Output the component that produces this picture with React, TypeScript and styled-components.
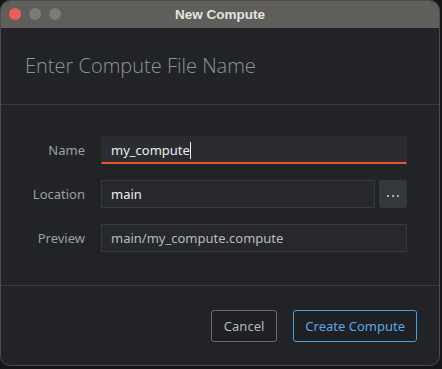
import styled, { createGlobalStyle } from "styled-components";

const GlobalStyle = createGlobalStyle`
    html, body {
        margin: 0;
        padding: 0;
        background: #141517;
        font-family: "Noto Sans", "Liberation Sans", sans-serif;
    }
`;

export default () => {
    return (
        <>
            <GlobalStyle />
            <Window>
                <TitleBar>
                    <Lights>
                        <Light color="#ec5f57" />
                        <Light color="#7b7a77" />
                        <Light color="#7b7a77" />
                    </Lights>
                    <Title>New Compute</Title>
                </TitleBar>
                <Header>
                    <Heading>Enter Compute File Name</Heading>
                </Header>
                <Form>
                    <Label>Name</Label>
                    <Field focused>
                        <Value>my_compute</Value>
                        <Caret />
                    </Field>
                    <Label>Location</Label>
                    <FieldRow>
                        <Field>
                            <Value>main</Value>
                        </Field>
                        <BrowseButton>
                            <Dot />
                            <Dot />
                            <Dot />
                        </BrowseButton>
                    </FieldRow>
                    <Label>Preview</Label>
                    <Field>
                        <Value muted>main/my_compute.compute</Value>
                    </Field>
                </Form>
                <Footer>
                    <Button>Cancel</Button>
                    <Button primary>Create Compute</Button>
                </Footer>
            </Window>
        </>
    );
};

const Window = styled.div`
    width: 440px;
    height: 366px;
    box-sizing: border-box;
    border: 1px solid #4a4b4d;
    border-radius: 10px;
    overflow: hidden;
    background: #212327;
    display: flex;
    flex-direction: column;
`;

const TitleBar = styled.div`
    height: 27px;
    flex: none;
    background: #5f5e5a;
    display: flex;
    align-items: center;
    justify-content: center;
    position: relative;
`;

const Lights = styled.div`
    position: absolute;
    left: 8px;
    top: 7px;
    display: flex;
    gap: 8px;
`;

const Light = styled.div.attrs({} as { color: string })`
    width: 12px;
    height: 12px;
    border-radius: 50%;
    background: ${(props) => props.color};
`;

const Title = styled.div`
    font-family: "Liberation Sans", "Noto Sans", sans-serif;
    font-weight: bold;
    font-size: 13.5px;
    color: #e4e3e0;
`;

const Header = styled.div`
    height: 77px;
    flex: none;
    box-sizing: border-box;
    padding-left: 24px;
    display: flex;
    align-items: center;
    border-bottom: 1px solid #393b3f;
`;

const Heading = styled.div`
    font-family: "Open Sans", "Noto Sans", sans-serif;
    font-weight: 300;
    font-size: 20px;
    color: #8c949c;
    margin-top: -1px;
`;

const Form = styled.div`
    height: 181px;
    flex: none;
    box-sizing: border-box;
    padding: 31px 32px 0 0;
    display: grid;
    grid-template-columns: 84px 1fr;
    grid-auto-rows: 28px;
    column-gap: 16px;
    row-gap: 16px;
    border-bottom: 1px solid #393b3f;
`;

const Label = styled.div`
    font-size: 13px;
    color: #9aa0a7;
    text-align: right;
    align-self: center;
`;

const FieldRow = styled.div`
    display: flex;
    gap: 4px;
`;

const Field = styled.div.attrs({} as { focused?: boolean })`
    flex: 1;
    box-sizing: border-box;
    height: 28px;
    display: flex;
    align-items: center;
    padding-left: 9px;
    background: ${(props) => (props.focused ? "#2a2c31" : "#26282c")};
    border: 1px solid ${(props) => (props.focused ? "#2a2c31" : "#383a3e")};
    border-bottom: ${(props) =>
        props.focused ? "2px solid #e4562a" : "1px solid #383a3e"};
    padding-top: ${(props) => (props.focused ? "1px" : "0")};
`;

const Value = styled.span.attrs({} as { muted?: boolean })`
    font-size: 13px;
    color: ${(props) => (props.muted ? "#b7bbc0" : "#eceef0")};
`;

const Caret = styled.span`
    width: 1px;
    height: 17px;
    background: #eceef0;
`;

const BrowseButton = styled.div`
    width: 28px;
    height: 28px;
    flex: none;
    border-radius: 3px;
    background: #34373c;
    display: flex;
    align-items: center;
    justify-content: center;
    gap: 3px;
    padding-top: 4px;
    box-sizing: border-box;
`;

const Dot = styled.span`
    width: 2px;
    height: 2px;
    background: #a8adb3;
`;

const Footer = styled.div`
    flex: 1;
    display: flex;
    justify-content: flex-end;
    align-items: flex-start;
    gap: 16px;
    padding: 24px 22px 0 0;
`;

const Button = styled.div.attrs({} as { primary?: boolean })`
    box-sizing: border-box;
    height: 32px;
    padding: 0 ${(props) => (props.primary ? "11px" : "12px")};
    display: flex;
    align-items: center;
    border-radius: 3px;
    font-size: 13px;
    background: #1e2024;
    color: ${(props) => (props.primary ? "#5aa8e6" : "#b4b8bd")};
    border: 1px solid ${(props) => (props.primary ? "#4d9fe0" : "#67696d")};
`;
